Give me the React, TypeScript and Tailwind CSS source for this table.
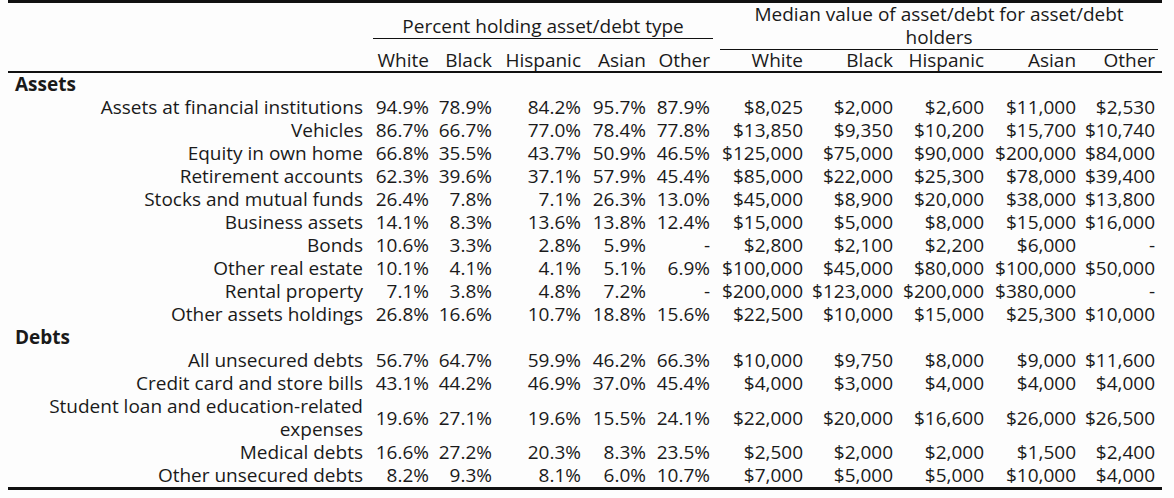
import React from 'react';

type Row = { label: React.ReactNode; pct: string[]; med: string[]; tall?: boolean };

const assets: Row[] = [
    { label: 'Assets at financial institutions', pct: ['94.9%', '78.9%', '84.2%', '95.7%', '87.9%'], med: ['$8,025', '$2,000', '$2,600', '$11,000', '$2,530'] },
    { label: 'Vehicles', pct: ['86.7%', '66.7%', '77.0%', '78.4%', '77.8%'], med: ['$13,850', '$9,350', '$10,200', '$15,700', '$10,740'] },
    { label: 'Equity in own home', pct: ['66.8%', '35.5%', '43.7%', '50.9%', '46.5%'], med: ['$125,000', '$75,000', '$90,000', '$200,000', '$84,000'] },
    { label: 'Retirement accounts', pct: ['62.3%', '39.6%', '37.1%', '57.9%', '45.4%'], med: ['$85,000', '$22,000', '$25,300', '$78,000', '$39,400'] },
    { label: 'Stocks and mutual funds', pct: ['26.4%', '7.8%', '7.1%', '26.3%', '13.0%'], med: ['$45,000', '$8,900', '$20,000', '$38,000', '$13,800'] },
    { label: 'Business assets', pct: ['14.1%', '8.3%', '13.6%', '13.8%', '12.4%'], med: ['$15,000', '$5,000', '$8,000', '$15,000', '$16,000'] },
    { label: 'Bonds', pct: ['10.6%', '3.3%', '2.8%', '5.9%', '-'], med: ['$2,800', '$2,100', '$2,200', '$6,000', '-'] },
    { label: 'Other real estate', pct: ['10.1%', '4.1%', '4.1%', '5.1%', '6.9%'], med: ['$100,000', '$45,000', '$80,000', '$100,000', '$50,000'] },
    { label: 'Rental property', pct: ['7.1%', '3.8%', '4.8%', '7.2%', '-'], med: ['$200,000', '$123,000', '$200,000', '$380,000', '-'] },
    { label: 'Other assets holdings', pct: ['26.8%', '16.6%', '10.7%', '18.8%', '15.6%'], med: ['$22,500', '$10,000', '$15,000', '$25,300', '$10,000'] },
];

const debts: Row[] = [
    { label: 'All unsecured debts', pct: ['56.7%', '64.7%', '59.9%', '46.2%', '66.3%'], med: ['$10,000', '$9,750', '$8,000', '$9,000', '$11,600'] },
    { label: 'Credit card and store bills', pct: ['43.1%', '44.2%', '46.9%', '37.0%', '45.4%'], med: ['$4,000', '$3,000', '$4,000', '$4,000', '$4,000'] },
    {
        label: (
            <>
                Student loan and education-related
                <br />
                expenses
            </>
        ),
        pct: ['19.6%', '27.1%', '19.6%', '15.5%', '24.1%'],
        med: ['$22,000', '$20,000', '$16,600', '$26,000', '$26,500'],
        tall: true,
    },
    { label: 'Medical debts', pct: ['16.6%', '27.2%', '20.3%', '8.3%', '23.5%'], med: ['$2,500', '$2,000', '$2,000', '$1,500', '$2,400'] },
    { label: 'Other unsecured debts', pct: ['8.2%', '9.3%', '8.1%', '6.0%', '10.7%'], med: ['$7,000', '$5,000', '$5,000', '$10,000', '$4,000'] },
];

const groups = ['White', 'Black', 'Hispanic', 'Asian', 'Other'];

function DataRow({ row }: { row: Row }) {
    const values = [...row.pct, ...row.med];
    return (
        <tr className={row.tall ? 'h-[46px]' : 'h-[23px]'}>
            <td className="p-0 pr-[4px] text-right align-middle">{row.label}</td>
            {values.map((v, i) => (
                <td key={i} className={`p-0 text-right align-middle ${i === 9 ? 'pr-[7px]' : 'pr-[4px]'}`}>
                    {v}
                </td>
            ))}
        </tr>
    );
}

function SectionRow({ title }: { title: string }) {
    return (
        <tr className="h-[23px]">
            <td colSpan={11} className="p-0 pl-[7px] text-left font-bold">
                {title}
            </td>
        </tr>
    );
}

export default function App() {
    return (
        <div className="min-h-screen w-full bg-[#fdfdfd] text-[#1a1a1a] text-[19px] leading-[23px] font-['Open_Sans',sans-serif]">
            <div className="ml-[8px] w-[1154px] border-y-[3px] border-[#111]">
                <table className="w-full table-fixed border-collapse">
                    <colgroup>
                        <col className="w-[359px]" />
                        <col className="w-[66px]" />
                        <col className="w-[63px]" />
                        <col className="w-[89px]" />
                        <col className="w-[65px]" />
                        <col className="w-[64px]" />
                        <col className="w-[93px]" />
                        <col className="w-[90px]" />
                        <col className="w-[91px]" />
                        <col className="w-[92px]" />
                        <col className="w-[82px]" />
                    </colgroup>
                    <thead>
                        <tr>
                            <th className="p-0" />
                            <th colSpan={5} className="p-0 align-middle font-normal">
                                <div className="ml-[6px] mr-[1px] border-b border-[#111] text-center">
                                    Percent holding asset/debt type
                                </div>
                            </th>
                            <th colSpan={5} className="p-0 align-bottom font-normal">
                                <div className="ml-[6px] mr-[4px] border-b border-[#111] text-center">
                                    Median value of asset/debt for asset/debt
                                    <br />
                                    holders
                                </div>
                            </th>
                        </tr>
                        <tr className="h-[21px]">
                            <th className="border-b-2 border-[#111] p-0" />
                            {[...groups, ...groups].map((g, i) => (
                                <th
                                    key={i}
                                    className={`border-b-2 border-[#111] p-0 text-right font-normal leading-[21px] ${i === 9 ? 'pr-[7px]' : 'pr-[4px]'}`}
                                >
                                    {g}
                                </th>
                            ))}
                        </tr>
                    </thead>
                    <tbody>
                        <SectionRow title="Assets" />
                        {assets.map((r, i) => (
                            <DataRow key={i} row={r} />
                        ))}
                        <SectionRow title="Debts" />
                        {debts.map((r, i) => (
                            <DataRow key={i} row={r} />
                        ))}
                    </tbody>
                </table>
            </div>
        </div>
    );
}
